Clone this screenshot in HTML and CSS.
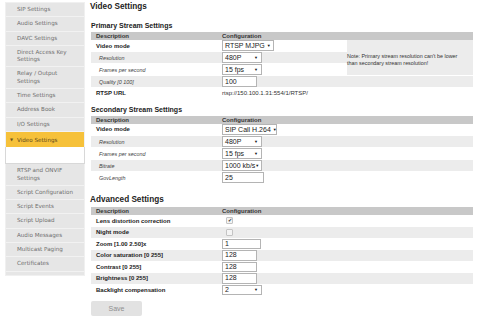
FILE: index.html
```html
<!DOCTYPE html>
<html>
<head>
<meta charset="utf-8">
<link rel="stylesheet" href="styles.css">
</head>
<body>
<div class="page">
  <nav class="sidebar">
    <div class="item">SIP Settings</div>
    <div class="item">Audio Settings</div>
    <div class="item">DAVC Settings</div>
    <div class="item">Direct Access Key Settings</div>
    <div class="item">Relay / Output Settings</div>
    <div class="item">Time Settings</div>
    <div class="item">Address Book</div>
    <div class="item">I/O Settings</div>
    <div class="item active"><span class="arrow">▼</span>Video Settings</div>
    <div class="submenu"></div>
    <div class="item">RTSP and ONVIF Settings</div>
    <div class="item">Script Configuration</div>
    <div class="item">Script Events</div>
    <div class="item">Script Upload</div>
    <div class="item">Audio Messages</div>
    <div class="item">Multicast Paging</div>
    <div class="item">Certificates</div>
  </nav>
  <main class="main">
    <h1 class="title">Video Settings</h1>

    <h2 class="subtitle">Primary Stream Settings</h2>
    <table class="grid primary">
      <tr class="head"><td class="c1">Description</td><td class="c2">Configuration</td><td class="c3"></td></tr>
      <tr class="row">
        <td class="lbl">Video mode</td>
        <td><span class="sel w52">RTSP MJPG <span class="caret">▼</span></span></td>
        <td class="note" rowspan="3">Note: Primary stream resolution can't be lower than secondary stream resolution!</td>
      </tr>
      <tr class="row alt"><td class="sub">Resolution</td><td><span class="sel w40 sp">480P<span class="caret">▼</span></span></td></tr>
      <tr class="row"><td class="sub">Frames per second</td><td><span class="sel w40 sp">15 fps<span class="caret">▼</span></span></td></tr>
      <tr class="row alt"><td class="sub">Quality [0 100]</td><td><span class="inp w35">100</span></td><td></td></tr>
      <tr class="row short"><td class="lbl">RTSP URL</td><td class="url" colspan="2">rtsp://150.100.1.31:554/1/RTSP/</td></tr>
    </table>

    <h2 class="subtitle sec">Secondary Stream Settings</h2>
    <table class="grid secondary">
      <tr class="head"><td class="c1">Description</td><td class="c2">Configuration</td><td class="c3"></td></tr>
      <tr class="row"><td class="lbl">Video mode</td><td colspan="2"><span class="sel w55">SIP Call H.264 <span class="caret">▼</span></span></td></tr>
      <tr class="row alt"><td class="sub">Resolution</td><td colspan="2"><span class="sel w40 sp">480P<span class="caret">▼</span></span></td></tr>
      <tr class="row"><td class="sub">Frames per second</td><td colspan="2"><span class="sel w40 sp">15 fps<span class="caret">▼</span></span></td></tr>
      <tr class="row alt"><td class="sub">Bitrate</td><td colspan="2"><span class="sel w40 sp">1000 kb/s<span class="caret">▼</span></span></td></tr>
      <tr class="row"><td class="sub">GovLength</td><td colspan="2"><span class="inp w42">25</span></td></tr>
    </table>

    <h1 class="title adv">Advanced Settings</h1>
    <table class="grid compact">
      <tr class="head"><td class="c1">Description</td><td class="c2">Configuration</td><td class="c3"></td></tr>
      <tr class="row"><td class="lbl">Lens distortion correction</td><td colspan="2"><span class="chk on">✔</span></td></tr>
      <tr class="row alt"><td class="lbl">Night mode</td><td colspan="2"><span class="chk"></span></td></tr>
      <tr class="row"><td class="lbl">Zoom [1.00 2.50]x</td><td colspan="2"><span class="inp w39">1</span></td></tr>
      <tr class="row alt"><td class="lbl">Color saturation [0 255]</td><td colspan="2"><span class="inp w35">128</span></td></tr>
      <tr class="row"><td class="lbl">Contrast [0 255]</td><td colspan="2"><span class="inp w35">128</span></td></tr>
      <tr class="row alt"><td class="lbl">Brightness [0 255]</td><td colspan="2"><span class="inp w35">128</span></td></tr>
      <tr class="row"><td class="lbl">Backlight compensation</td><td colspan="2"><span class="sel w40 sp">2<span class="caret">▼</span></span></td></tr>
    </table>

    <button class="save">Save</button>
  </main>
</div>
</body>
</html>
```
FILE: styles.css
```css
html, body {
  margin: 0;
  padding: 0;
  background: #ffffff;
}
body {
  font-family: "Liberation Sans", Arial, sans-serif;
  color: #222;
}
.page {
  display: flex;
  align-items: flex-start;
  width: 482px;
  height: 320px;
  overflow: hidden;
}
.sidebar {
  margin-left: 5px;
  margin-top: 2px;
  width: 80px;
  background: #e6e6e6;
  border: 1px solid #f0f0f0;
  box-sizing: border-box;
  padding-bottom: 3px;
  font-family: "DejaVu Sans", Verdana, sans-serif;
  font-size: 5.6px;
  color: #6f6f6f;
}
.item {
  padding: 3px 4px 3px 11px;
  line-height: 7.3px;
  min-height: 7.3px;
  border-bottom: 1px solid #f2f2f2;
}
.item.active {
  background: #f6c13a;
  color: #5d4a1c;
  padding: 4px 4px 3px 4px;
  border-bottom: none;
}
.arrow {
  display: inline-block;
  width: 7px;
  font-size: 4px;
  color: #6b5220;
  vertical-align: 1px;
}
.submenu {
  height: 16px;
  background: #ffffff;
  border: 1px solid #d8d8d8;
  border-top: none;
  margin: 0 -1px 0 -1px;
}
.main {
  margin-left: 5px;
  width: 388px;
  padding-top: 2px;
}
.title {
  margin: 0;
  font-size: 8.2px;
  line-height: 10px;
  font-weight: bold;
  color: #222;
}
.title.adv {
  margin-top: 11px;
  margin-bottom: 2px;
}
.subtitle {
  margin: 9px 0 2px 1px;
  font-size: 7px;
  line-height: 9px;
  font-weight: bold;
  color: #222;
}
.subtitle.sec {
  margin-top: 7px;
}
.grid {
  margin-left: 1px;
  width: 382px;
  border-collapse: collapse;
  table-layout: fixed;
  font-size: 6px;
}
.grid td {
  box-sizing: border-box;
  padding: 0;
  vertical-align: middle;
  line-height: 8px;
}
.c1 { width: 131px; }
.c2 { width: 125px; }
.c3 { width: 126px; }
.head td {
  background: #c8c8c8;
  height: 8px;
  line-height: 8px;
  font-weight: bold;
  color: #333;
}
.head .c1 { padding-left: 5px; }
.row td {
  height: 11.5px;
  border-bottom: 1px solid #ffffff;
}
.secondary .row td {
  height: 12px;
}
.row.alt td {
  background: #ececec;
}
.row.short td {
  height: 10px;
  border-bottom: none;
}
.lbl {
  padding-left: 5px !important;
  font-weight: bold;
  color: #222;
}
.sub {
  padding-left: 8px !important;
  font-style: italic;
  font-size: 5.4px;
  color: #444;
}
.url {
  font-size: 6px;
  color: #333;
}
.note {
  background: #ececec !important;
  font-size: 5.4px;
  line-height: 6.5px !important;
  color: #333;
  padding: 4px 10px 0 0 !important;
  vertical-align: middle;
}
.sel, .inp {
  display: inline-block;
  box-sizing: border-box;
  height: 11px;
  line-height: 9px;
  border: 1px solid #b4b4b4;
  background: #ffffff;
  font-size: 7px;
  color: #222;
  padding: 0 2px;
  vertical-align: middle;
  white-space: nowrap;
}
.compact .sel, .compact .inp {
  height: 10.5px;
  line-height: 8.5px;
}
.sel.sp {
  display: inline-flex;
  justify-content: space-between;
  align-items: center;
}
.caret {
  font-size: 4px;
  color: #111;
  padding-right: 1px;
  vertical-align: 1px;
}
.w35 { width: 35px; }
.w39 { width: 39px; }
.w40 { width: 40px; }
.w42 { width: 42px; }
.w52 { width: 52px; }
.w55 { width: 55px; }
.chk {
  display: inline-block;
  box-sizing: border-box;
  width: 7px;
  height: 7px;
  margin-left: 4px;
  border: 1px solid #c4c4c4;
  border-radius: 1px;
  background: #f4f4f4;
  font-size: 5px;
  line-height: 5px;
  text-align: center;
  color: #333;
  vertical-align: middle;
}
.save {
  display: block;
  margin: 4.5px 0 0 1px;
  width: 51px;
  height: 15px;
  border: none;
  border-radius: 2px;
  background: #e2e2e2;
  color: #8f8f8f;
  font-family: "Liberation Sans", Arial, sans-serif;
  font-size: 7px;
  padding: 0;
}
```
